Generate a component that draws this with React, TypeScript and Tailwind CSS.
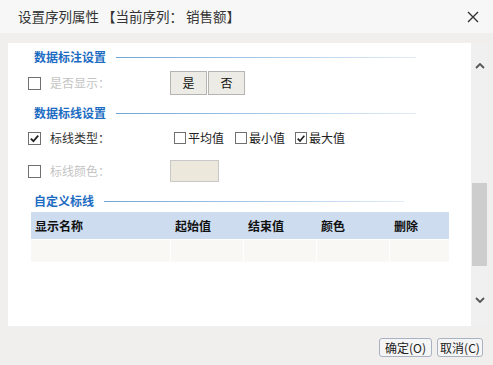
import type { ReactNode } from "react";

const font = { fontFamily: '"Noto Sans CJK SC", "Noto Sans", sans-serif' };

const columns = [
  { id: "1", header: "显示名称", w: "w-[139px]" },
  { id: "2", header: "起始值", w: "w-[72px]" },
  { id: "3", header: "结束值", w: "w-[72px]" },
  { id: "4", header: "颜色", w: "w-[72px]" },
  { id: "5", header: "删除", w: "flex-1" },
];

const CheckBox = ({ checked, size = "w-[13px] h-[13px]" }: { checked?: boolean; size?: string }) => (
  <span className={`${size} border border-[#707070] bg-white flex items-center justify-center shrink-0`}>
    {checked && (
      <svg viewBox="0 0 12 12" className="w-[11px] h-[11px]">
        <path d="M2 6.2 L4.8 9 L10 2.8" fill="none" stroke="#222" strokeWidth="2" />
      </svg>
    )}
  </span>
);

const Heading = ({ children }: { children: ReactNode }) => (
  <div className="flex items-center h-[20px]">
    <span className="text-[12px] font-bold text-[#1c6cc2] leading-[20px]">{children}</span>
    <span className="ml-[10px] w-[300px] h-px bg-gradient-to-r from-[#6fa5d6] to-[#e2edf8]" />
  </div>
);

export default function App() {
  return (
    <div className="w-[493px] h-[365px] bg-[#f0efee] flex flex-col text-[#333]" style={font}>
      <div className="h-[33px] bg-[#f7f7f7] flex items-center justify-between pl-[18px] pr-[14px]">
        <span className="text-[13.5px] leading-none text-[#333]">设置序列属性 【当前序列： 销售额】</span>
        <svg viewBox="0 0 12 12" className="w-[12px] h-[12px]">
          <path d="M1 1 L11 11 M11 1 L1 11" stroke="#333" strokeWidth="1.4" />
        </svg>
      </div>

      <div className="flex pl-[8px] pt-[10px]">
        <div className="w-[463px] h-[283px] bg-white flex flex-col pt-[4px]">
          <div className="pl-[26px]">
            <Heading>数据标注设置</Heading>
          </div>
          <div className="flex items-center h-[24px] mt-[4px] pl-[20px]">
            <CheckBox />
            <span className="ml-[9px] w-[120px] text-[12px] text-[#c4c4c4]">是否显示：</span>
            <button className="w-[37px] h-[24px] bg-[#ecebe5] border border-[#b4b4b0] text-[12px] text-[#111]">是</button>
            <button className="ml-px w-[37px] h-[24px] bg-[#ecebe5] border border-[#b4b4b0] text-[12px] text-[#111]">否</button>
          </div>
          <div className="pl-[26px] mt-[8px]">
            <Heading>数据标线设置</Heading>
          </div>
          <div className="flex items-center h-[20px] mt-[5px] pl-[20px]">
            <CheckBox checked />
            <span className="ml-[9px] w-[124px] text-[12px] text-[#333]">标线类型：</span>
            <div className="flex items-center gap-[2px]">
              <CheckBox size="w-[12px] h-[12px]" />
              <span className="text-[12px] text-[#222]">平均值</span>
            </div>
            <div className="flex items-center gap-[2px] ml-[11px]">
              <CheckBox size="w-[12px] h-[12px]" />
              <span className="text-[12px] text-[#222]">最小值</span>
            </div>
            <div className="flex items-center gap-[2px] ml-[10px]">
              <CheckBox checked size="w-[12px] h-[12px]" />
              <span className="text-[12px] text-[#222]">最大值</span>
            </div>
          </div>
          <div className="flex items-center h-[22px] mt-[12px] pl-[20px]">
            <CheckBox />
            <span className="ml-[9px] w-[120px] text-[12px] text-[#c4c4c4]">标线颜色：</span>
            <span className="w-[49px] h-[22px] bg-[#ece9dc] border border-[#c8c8c8]" />
          </div>
          <div className="pl-[26px] mt-[9px]">
            <Heading>自定义标线</Heading>
          </div>
          <div className="ml-[23px] w-[418px] mt-px">
            <div className="flex h-[27px] bg-[#cddcef] gap-px">
              {columns.map((c) => (
                <div key={c.id} className={`${c.w} bg-[#cddcef] flex items-center pl-[4px] text-[12px] font-bold text-[#111]`}>
                  {c.header}
                </div>
              ))}
            </div>
            <div className="flex h-[22px] mt-px gap-px">
              {columns.map((c) => (
                <div key={c.id} className={`${c.w} bg-[#f9f8f4]`} />
              ))}
            </div>
          </div>
        </div>

        <div className="w-[17px] h-[283px] bg-[#f0f0f0] flex flex-col items-center">
          <svg viewBox="0 0 10 6" className="w-[10px] h-[6px] mt-[20px]">
            <path d="M1 5 L5 1 L9 5" fill="none" stroke="#555" strokeWidth="1.8" />
          </svg>
          <div className="w-[15px] h-[83px] bg-[#cdcdcd] mt-[114px]" />
          <svg viewBox="0 0 10 6" className="w-[10px] h-[6px] mt-[31px]">
            <path d="M1 1 L5 5 L9 1" fill="none" stroke="#555" strokeWidth="1.8" />
          </svg>
        </div>
      </div>

      <div className="flex justify-end gap-[5px] pr-[10px] pt-[12px]">
        <button className="w-[53px] h-[19px] rounded-[3px] border border-[#a9b2c2] bg-[#f5f5f5] text-[12px] leading-none text-[#222]">确定(O)</button>
        <button className="w-[46px] h-[19px] rounded-[3px] border border-[#a9b2c2] bg-[#f5f5f5] text-[12px] leading-none text-[#222]">取消(C)</button>
      </div>
    </div>
  );
}
